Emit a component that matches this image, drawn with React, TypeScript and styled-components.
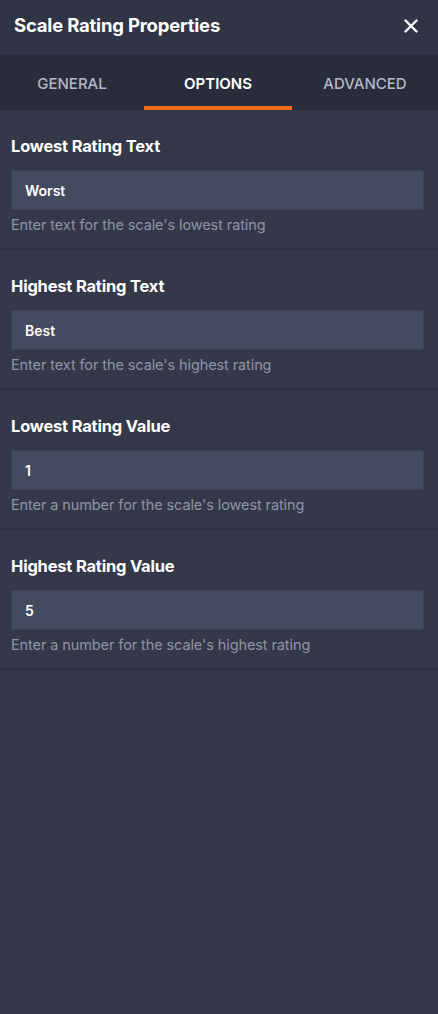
import React, { useState } from 'react';
import styled, { createGlobalStyle } from 'styled-components';

const GlobalStyle = createGlobalStyle`
    html, body {
        margin: 0;
        padding: 0;
        background: #343849;
    }
    * {
        box-sizing: border-box;
    }
`;

type Field = {
    label: string;
    value: string;
    help: string;
};

const fields: Field[] = [
    {
        label: 'Lowest Rating Text',
        value: 'Worst',
        help: "Enter text for the scale's lowest rating",
    },
    {
        label: 'Highest Rating Text',
        value: 'Best',
        help: "Enter text for the scale's highest rating",
    },
    {
        label: 'Lowest Rating Value',
        value: '1',
        help: "Enter a number for the scale's lowest rating",
    },
    {
        label: 'Highest Rating Value',
        value: '5',
        help: "Enter a number for the scale's highest rating",
    },
];

const tabs = ['GENERAL', 'OPTIONS', 'ADVANCED'];

const App: React.FC = () => {
    const [activeTab, setActiveTab] = useState(1);

    return (
        <>
            <GlobalStyle />
            <Panel>
                <Header>
                    <Title>Scale Rating Properties</Title>
                    <CloseButton aria-label="Close">
                        <svg width="14" height="14" viewBox="0 0 14 14">
                            <path
                                d="M1.5 1.5 L12.5 12.5 M12.5 1.5 L1.5 12.5"
                                stroke="#ffffff"
                                strokeWidth="2.4"
                                strokeLinecap="round"
                            />
                        </svg>
                    </CloseButton>
                </Header>
                <TabBar>
                    {tabs.map((t, i) => (
                        <Tab
                            key={t}
                            $active={i === activeTab}
                            onClick={() => setActiveTab(i)}
                        >
                            {t}
                        </Tab>
                    ))}
                </TabBar>
                <Sections>
                    {fields.map((f) => (
                        <Section key={f.label}>
                            <Label>{f.label}</Label>
                            <Input defaultValue={f.value} />
                            <Help>{f.help}</Help>
                        </Section>
                    ))}
                </Sections>
            </Panel>
        </>
    );
};

const Panel = styled.div`
    display: flex;
    flex-direction: column;
    width: 438px;
    min-height: 1014px;
    background-color: #343849;
    font-family: Inter, 'Open Sans', sans-serif;
`;

const Header = styled.div`
    display: flex;
    align-items: center;
    justify-content: space-between;
    height: 55px;
    padding: 0 20px 0 14px;
    background-color: #303445;
`;

const Title = styled.h1`
    margin: 0;
    margin-top: -5px;
    font-size: 18.5px;
    font-weight: 700;
    color: #ffffff;
    letter-spacing: -0.2px;
`;

const CloseButton = styled.button`
    display: flex;
    align-items: center;
    justify-content: center;
    padding: 0;
    margin: -3px 0 0;
    border: none;
    background: none;
    cursor: pointer;
`;

const TabBar = styled.div`
    display: grid;
    grid-template-columns: 144px 148px 146px;
    height: 55px;
    background-color: #292d3b;
`;

const Tab = styled.div<{ $active: boolean }>`
    display: flex;
    align-items: center;
    justify-content: center;
    padding-top: 6px;
    font-size: 15px;
    font-weight: ${(p) => (p.$active ? 600 : 500)};
    color: ${(p) => (p.$active ? '#ffffff' : '#b4b8c6')};
    border-bottom: 4px solid
        ${(p) => (p.$active ? '#f26c1c' : 'transparent')};
    cursor: pointer;
`;

const Sections = styled.div`
    display: flex;
    flex-direction: column;
`;

const Section = styled.div`
    display: flex;
    flex-direction: column;
    height: 140px;
    padding: 26px 14px 0 11px;
    border-bottom: 2px solid #2c303f;
`;

const Label = styled.div`
    font-size: 16.5px;
    font-weight: 700;
    color: #ffffff;
    line-height: 20px;
    letter-spacing: -0.2px;
`;

const Input = styled.input`
    height: 40px;
    margin-top: 14px;
    padding: 0 13px;
    border: 1px solid #3c4255;
    background-color: #444a5f;
    color: #ffffff;
    font-family: inherit;
    font-size: 14px;
    font-weight: 600;
    outline: none;
`;

const Help = styled.div`
    margin-top: 6px;
    font-size: 14.5px;
    color: #8f94a6;
    line-height: 18px;
    letter-spacing: -0.1px;
`;

export default App;
